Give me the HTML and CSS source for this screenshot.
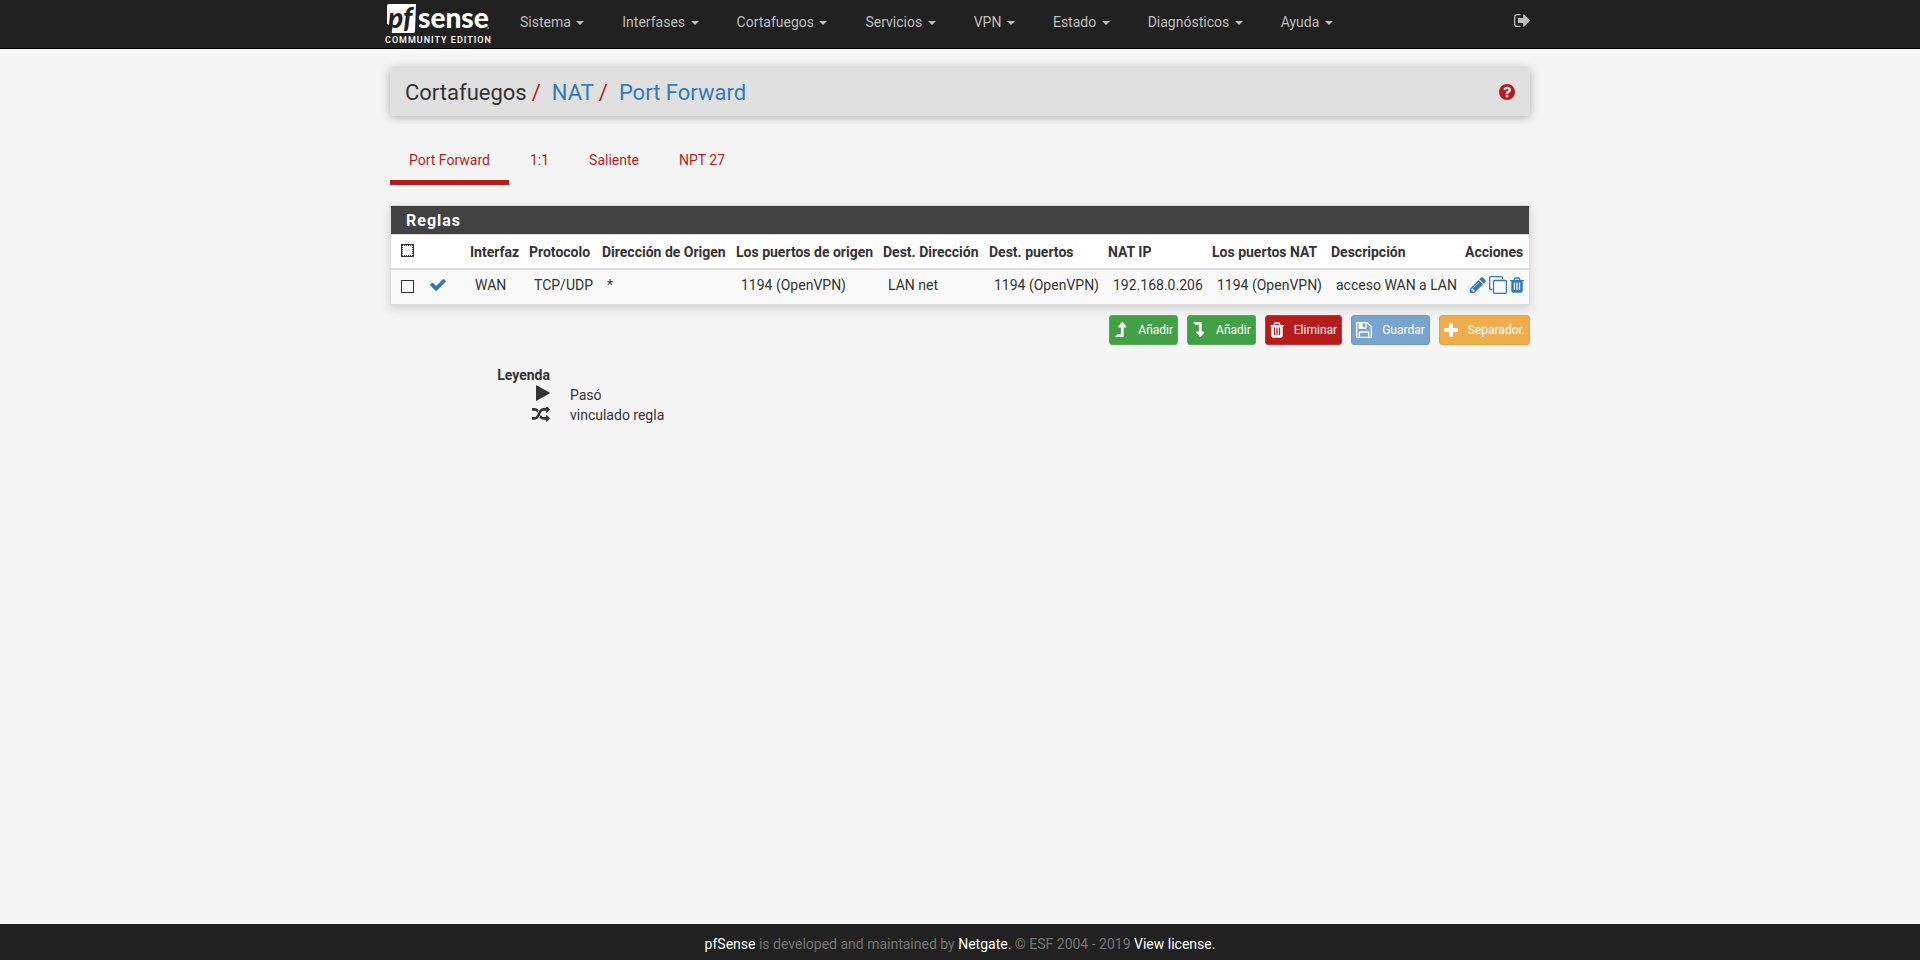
FILE: index.html
```html
<!DOCTYPE html>
<html lang="es">
<head>
<meta charset="utf-8">
<title>Cortafuegos: NAT: Port Forward</title>
<link rel="stylesheet" href="styles.css">
</head>
<body>
<svg class="sprite" aria-hidden="true">
  <symbol id="trash" viewBox="192 128 1408 1536"><path d="M704 1376v-704q0-14-9-23t-23-9h-64q-14 0-23 9t-9 23v704q0 14 9 23t23 9h64q14 0 23-9t9-23zm256 0v-704q0-14-9-23t-23-9h-64q-14 0-23 9t-9 23v704q0 14 9 23t23 9h64q14 0 23-9t9-23zm256 0v-704q0-14-9-23t-23-9h-64q-14 0-23 9t-9 23v704q0 14 9 23t23 9h64q14 0 23-9t9-23zm-544-992h448l-48-117q-7-9-17-11h-317q-10 2-17 11zm928 32v64q0 14-9 23t-23 9h-96v948q0 83-47 143.500t-113 60.500h-832q-66 0-113-58.500t-47-141.500v-952h-96q-14 0-23-9t-9-23v-64q0-14 9-23t23-9h309l70-167q15-37 54-63t79-26h320q40 0 79 26t54 63l70 167h309q14 0 23 9t9 23z"/></symbol>
  <symbol id="level" viewBox="320 128 1024 1408"><path d="M1331 603q-18 37-58 37h-192v864q0 14-9 23t-23 9h-704q-21 0-29-18-8-20 4-35l160-192q9-11 25-11h320v-640h-192q-40 0-58-37-17-37 9-68l320-384q18-22 49-22t49 22l320 384q27 32 9 68z"/></symbol>
</svg>

<header class="topbar">
  <div class="container topbar-row">
    <a class="brand" href="#">
      <svg class="logo" viewBox="0 0 104 30" role="img" aria-label="pfSense">
        <path d="M4 0H31L30 27Q30 29 28 29H5L7 23L2 20V2Q2 0 4 0Z" fill="#fff"/>
        <text class="logo-pf" x="3" y="24">pf</text>
        <text class="logo-sense" x="33" y="24">sense</text>
        <circle cx="103" cy="24" r="1" fill="#888"/>
      </svg>
      <span class="edition">COMMUNITY EDITION</span>
    </a>
    <nav class="menu">
      <a href="#">Sistema <span class="caret"></span></a>
      <a href="#">Interfases <span class="caret"></span></a>
      <a href="#">Cortafuegos <span class="caret"></span></a>
      <a href="#">Servicios <span class="caret"></span></a>
      <a href="#">VPN <span class="caret"></span></a>
      <a href="#">Estado <span class="caret"></span></a>
      <a href="#">Diagnósticos <span class="caret"></span></a>
      <a href="#">Ayuda <span class="caret"></span></a>
    </nav>
    <a class="logout" href="#" aria-label="Logout"><svg viewBox="64 256 1568 1280" width="16" height="13"><path d="M704 1440q0 4 1 20t.5 26.500-3 23.500-10 19.500-20.500 6.500h-320q-119 0-203.500-84.500t-84.500-203.500v-704q0-119 84.500-203.500t203.500-84.500h320q13 0 22.500 9.500t9.500 22.500q0 4 1 20t.5 26.500-3 23.500-10 19.500-20.500 6.500h-320q-66 0-113 47t-47 113v704q0 66 47 113t113 47h312l11.500 1 11.500 3 8 5.500 7 9 2 13.500zm928-544q0 26-19 45l-544 544q-19 19-45 19t-45-19-19-45v-288h-448q-26 0-45-19t-19-45v-384q0-26 19-45t45-19h448v-288q0-26 19-45t45-19 45 19l544 544q19 19 19 45z"/></svg></a>
  </div>
</header>

<main class="container">
  <div class="heading">
    <h1 class="crumbs"><span>Cortafuegos</span><i>/</i><a href="#">NAT</a><i>/</i><a href="#">Port Forward</a></h1>
    <a class="help" href="#" aria-label="Help"><svg viewBox="128 128 1536 1536" width="16" height="16"><path d="M1024 1376v-192q0-14-9-23t-23-9h-192q-14 0-23 9t-9 23v192q0 14 9 23t23 9h192q14 0 23-9t9-23zm256-672q0-88-55.500-163t-138.500-116-170-41q-243 0-371 213-15 24 8 42l132 100q7 6 19 6 16 0 25-12 53-68 86-92 34-24 86-24 48 0 85.500 26t37.500 59q0 38-20 61t-68 45q-63 28-115.500 86.500t-52.500 125.500v36q0 14 9 23t23 9h192q14 0 23-9t9-23q0-19 21.500-49.500t54.500-49.500q32-18 49-28.500t46-35 44.500-48 28-60.500 12.500-81zm384 192q0 209-103 385.500t-279.500 279.500-385.500 103-385.500-103-279.500-279.500-103-385.500 103-385.500 279.500-279.500 385.500-103 385.500 103 279.500 279.500 103 385.500z"/></svg></a>
  </div>

  <nav class="tabs">
    <a class="active" href="#">Port Forward</a>
    <a href="#">1:1</a>
    <a href="#">Saliente</a>
    <a href="#">NPT 27</a>
  </nav>

  <section class="panel">
    <h2>Reglas</h2>
    <table>
      <colgroup><col class="c-box"><col class="c-state"><col class="c-if"><col class="c-proto"><col class="c-src"><col class="c-srcport"><col class="c-dst"><col class="c-dstport"><col class="c-natip"><col class="c-natport"><col class="c-desc"><col class="c-act"></colgroup>
      <thead>
        <tr>
          <th class="box"><input class="focus" type="checkbox" aria-label="Seleccionar todo"></th><th></th>
          <th>Interfaz</th><th>Protocolo</th><th>Dirección de Origen</th><th>Los puertos de origen</th><th>Dest. Dirección</th><th>Dest. puertos</th><th>NAT IP</th><th>Los puertos NAT</th><th>Descripción</th><th>Acciones</th>
        </tr>
      </thead>
      <tbody>
        <tr>
          <td class="box"><input type="checkbox" aria-label="Seleccionar regla"></td>
          <td class="state"><svg viewBox="121 334 1550 1188" width="16" height="12"><path d="M1671 566q0 40-28 68l-724 724-136 136q-28 28-68 28t-68-28l-136-136-362-362q-28-28-28-68t28-68l136-136q28-28 68-28t68 28l294 295 656-657q28-28 68-28t68 28l136 136q28 28 28 68z"/></svg></td>
          <td>WAN</td><td>TCP/UDP</td><td>*</td><td>1194 (OpenVPN)</td><td>LAN net</td><td>1194 (OpenVPN)</td><td>192.168.0.206</td><td>1194 (OpenVPN)</td><td>acceso WAN a LAN</td>
          <td><div class="actions">
            <a href="#" aria-label="Editar"><svg viewBox="128 128 1536 1536" width="16" height="16"><path d="M491 1536l91-91-235-235-91 91v107h128v128h107zm523-928q0-22-22-22-10 0-17 7l-542 542q-7 7-7 17 0 22 22 22 10 0 17-7l542-542q7-7 7-17zm-54-192l416 416-832 832h-416v-416zm683 96q0 53-37 90l-166 166-416-416 166-165q36-38 90-38 53 0 91 38l235 234q37 39 37 91z"/></svg></a>
            <a href="#" aria-label="Copiar"><svg viewBox="0 0 1792 1792" width="18" height="18"><path d="M1664 1632v-1088q0-13-9.500-22.500t-22.500-9.500h-1088q-13 0-22.500 9.500t-9.500 22.500v1088q0 13 9.500 22.500t22.500 9.500h1088q13 0 22.500-9.500t9.500-22.500zm128-1088v1088q0 66-47 113t-113 47h-1088q-66 0-113-47t-47-113v-1088q0-66 47-113t113-47h1088q66 0 113 47t47 113zm-384-384v160h-128v-160q0-13-9.500-22.500t-22.500-9.500h-1088q-13 0-22.500 9.500t-9.500 22.500v1088q0 13 9.500 22.500t22.500 9.500h160v128h-160q-66 0-113-47t-47-113v-1088q0-66 47-113t113-47h1088q66 0 113 47t47 113z"/></svg></a>
            <a href="#" aria-label="Eliminar"><svg width="14" height="16"><use href="#trash"/></svg></a>
          </div></td>
        </tr>
      </tbody>
    </table>
  </section>

  <div class="buttons">
    <button class="btn green" type="button"><svg width="14" height="15"><use href="#level"/></svg>Añadir</button>
    <button class="btn green" type="button"><svg class="flip" width="14" height="15"><use href="#level"/></svg>Añadir</button>
    <button class="btn red" type="button"><svg width="14" height="16"><use href="#trash"/></svg>Eliminar</button>
    <button class="btn blue" type="button" disabled><svg viewBox="128 128 1536 1536" width="16" height="16"><path d="M512 1536h768v-384h-768v384zm896 0h128v-896q0-14-10-38.500t-20-34.500l-281-281q-10-10-34-20t-39-10v416q0 40-28 68t-68 28h-576q-40 0-68-28t-28-68v-416h-128v1280h128v-416q0-40 28-68t68-28h832q40 0 68 28t28 68v416zm-384-928v-320q0-13-9.500-22.500t-22.500-9.500h-192q-13 0-22.500 9.500t-9.500 22.500v320q0 13 9.500 22.500t22.500 9.500h192q13 0 22.500-9.500t9.500-22.500zm640 32v928q0 40-28 68t-68 28h-1344q-40 0-68-28t-28-68v-1344q0-40 28-68t68-28h928q40 0 88 20t76 48l280 280q28 28 48 76t20 88z"/></svg>Guardar</button>
    <button class="btn orange" type="button"><svg viewBox="192 128 1408 1408" width="14" height="14"><path d="M1600 736v192q0 40-28 68t-68 28h-416v416q0 40-28 68t-68 28h-192q-40 0-68-28t-28-68v-416h-416q-40 0-68-28t-28-68v-192q0-40 28-68t68-28h416v-416q0-40 28-68t68-28h192q40 0 68 28t28 68v416h416q40 0 68 28t28 68z"/></svg>Separador.</button>
  </div>

  <dl class="legend">
    <dt>Leyenda</dt><dd></dd>
    <dt><svg viewBox="0 0 14 16" width="14" height="16"><path d="M0 .5Q0 0 .5.2L13.600 7.500Q14 8 13.600 8.400L.5 15.800Q0 16 0 15.500Z"/></svg></dt><dd>Pasó</dd>
    <dt class="shuffle"><svg viewBox="0 160 1792 1472" width="18" height="15"><path d="M666 481q-60 92-137 273-22-45-37-72.500t-40.500-63.500-51-56.500-63-35-81.500-14.500h-224q-14 0-23-9t-9-23v-192q0-14 9-23t23-9h224q250 0 410 225zm1126 799q0 14-9 23l-320 320q-9 9-23 9-13 0-22.500-9.500t-9.500-22.500v-192q-32 0-85 .5t-81 1-73-1-71-5-64-10.500-63-18.500-58-28.500-59-40-55-53.500-56-69.500q59-93 136-273 22 45 37 72.500t40.500 63.500 51 56.500 63 35 81.500 14.500h256v-192q0-14 9-23t23-9q12 0 24 10l319 319q9 9 9 23zm0-896q0 14-9 23l-320 320q-9 9-23 9-13 0-22.500-9.500t-9.500-22.500v-192h-256q-48 0-87 15t-69 45-51 61.500-45 77.500q-32 62-78 171-29 66-49.500 111t-54 105-64 100-74 83-90 68.500-106.500 42-128 16.500h-224q-14 0-23-9t-9-23v-192q0-14 9-23t23-9h224q48 0 87-15t69-45 51-61.500 45-77.500q32-62 78-171 29-66 49.500-111t54-105 64-100 74-83 90-68.500 106.500-42 128-16.500h256v-192q0-14 9-23t23-9q12 0 24 10l319 319q9 9 9 23z"/></svg></dt><dd>vinculado regla</dd>
  </dl>
</main>

<footer class="footer"><a href="#">pfSense</a> is developed and maintained by <a href="#">Netgate.</a> © ESF 2004 - 2019 <a href="#">View license.</a></footer>
</body>
</html>
```
FILE: styles.css
```css
* { box-sizing: border-box; }
body {
  margin: 0;
  min-height: 100vh;
  display: flex;
  flex-direction: column;
  background: #f5f5f5;
  color: #333;
  font: 14px/20px Roboto, sans-serif;
}
a { color: #337ab7; text-decoration: none; }
svg { display: block; fill: currentColor; }
.sprite { display: none; }
.container { width: 100%; max-width: 1140px; margin: 0 auto; }

.topbar { background: #212121; border-bottom: 1px solid #000; }
.topbar-row { display: flex; height: 48px; }
.brand { width: 111px; margin-left: -5px; padding-top: 4px; }
.logo { width: 104px; height: 30px; overflow: visible; }
.logo-pf { font: italic 900 28px Lato, sans-serif; fill: #212121; }
.logo-sense { font: 900 28px Lato, sans-serif; fill: #fff; }
.edition { display: block; color: #fff; font-size: 9px; font-weight: 500; line-height: 12px; letter-spacing: 1px; white-space: nowrap; }
.menu { display: flex; flex: 1; padding-left: 5px; }
.menu a { padding: 12px 19px; color: #bdbdbd; white-space: nowrap; }
.caret { display: inline-block; margin-left: 2px; vertical-align: middle; border: 4px solid transparent; border-top-color: currentColor; border-bottom: 0; }
.logout { margin-top: 14px; color: #bdbdbd; }

.heading {
  display: flex;
  align-items: center;
  justify-content: space-between;
  height: 48px;
  margin: 19px 0 23px;
  padding: 0 15px;
  background: #e0e0e0;
  border-radius: 4px;
  box-shadow: 0 1px 10px rgba(0, 0, 0, .3);
}
.crumbs { margin: 0; padding-top: 2px; font-size: 22px; line-height: 24px; font-weight: 400; }
.crumbs i { margin: 0 11px 0 5px; color: #b71c1c; font-style: normal; }
.help { color: #b71c1c; }

.tabs { display: flex; gap: 2px; }
.tabs a { height: 46px; padding: 11px 19px 10px; color: #b71c1c; border-bottom: 5px solid transparent; }
.tabs .active { border-color: #b71c1c; }

.panel {
  margin-top: 20px;
  background: #fff;
  border: 1px solid #ddd;
  box-shadow: 0 4px 10px rgba(0, 0, 0, .15);
}
.panel h2 {
  margin: 0;
  padding: 5px 15px 3px;
  background: #424242;
  color: #fff;
  font-size: 16px;
  line-height: 20px;
  font-weight: 700;
  letter-spacing: 1px;
}
table { width: 100%; border-collapse: collapse; border-top: 1px solid #ddd; table-layout: fixed; }
.c-box { width: 34px; } .c-state { width: 40px; } .c-if { width: 59px; } .c-proto { width: 73px; }
.c-src { width: 134px; } .c-srcport { width: 147px; } .c-dst { width: 106px; } .c-dstport { width: 119px; }
.c-natip { width: 104px; } .c-natport { width: 119px; } .c-desc { width: 134px; } .c-act { width: 69px; }
th { height: 34px; padding: 1px 0 0 5px; border-bottom: 2px solid #ddd; text-align: left; white-space: nowrap; }
td { height: 35px; padding: 0 0 3px 10px; background: #f9f9f9; white-space: nowrap; }
.box { padding: 0 0 1px 10px; }
.state { padding-left: 5px; color: #337ab7; }
input {
  display: block;
  appearance: none;
  width: 13px;
  height: 13px;
  margin: 0;
  background: #fff;
  border: 1px solid #333;
}
.focus { outline: 1px dotted #333; outline-offset: -2px; }
.actions { display: flex; align-items: center; gap: 3px; color: #337ab7; }

.buttons { display: flex; justify-content: flex-end; gap: 9px; margin-top: 10px; }
.btn {
  display: flex;
  align-items: center;
  justify-content: space-between;
  gap: 10px;
  height: 30px;
  padding: 0 4px;
  border: 1px solid;
  border-radius: 3px;
  color: #fff;
  font: 12px/18px Roboto, sans-serif;
}
.green { background: #43a047; border-color: #4caf50; }
.red { background: #b71c1c; border-color: #d32f2f; }
.blue { background: #78a5ce; border-color: #6d9ac5; }
.orange { background: #f0ad4e; border-color: #eea236; }
.flip { transform: scaleY(-1); }

.legend { display: grid; grid-template-columns: 160px 1fr; column-gap: 20px; margin: 20px 0; }
.legend dt { display: flex; justify-content: flex-end; font-weight: 700; height: 20px; }
.legend .shuffle { align-items: center; }
.legend dd { margin: 0; }

.footer { margin-top: auto; height: 36px; padding-top: 10px; background: #212121; color: #757575; text-align: center; }
.footer a { color: #fff; }
```
